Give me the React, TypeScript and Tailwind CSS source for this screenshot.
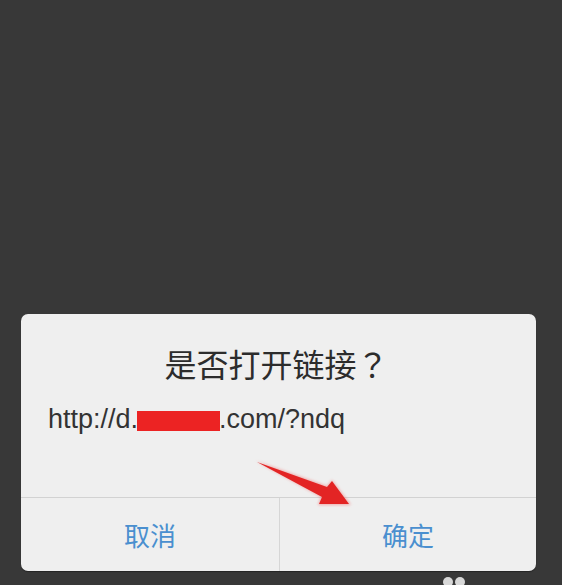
import React from 'react';

const latin = { fontFamily: '"Liberation Sans", "Noto Sans CJK SC", sans-serif' };
const cjk = { fontFamily: '"Noto Sans CJK SC", "Liberation Sans", sans-serif' };
const tc = { fontFamily: '"Noto Sans CJK TC", "Noto Sans CJK SC", sans-serif' };

function PointerArrow() {
  return (
    <svg
      className="pointer-events-none absolute left-0 top-0 h-full w-full"
      viewBox="0 0 515 257"
      fill="none"
    >
      <defs>
        <filter id="glow" x="-20%" y="-20%" width="140%" height="140%">
          <feGaussianBlur stdDeviation="1.4" />
        </filter>
      </defs>
      {/* soft halo round the marker */}
      <polygon
        points="235,147 306,172 311,166 330,191 297,191 300,183"
        fill="#f07070"
        opacity="0.55"
        filter="url(#glow)"
      />
      <polygon points="236,148 306,173 311,167 328,190 298,190 301,183" fill="#e32424" />
    </svg>
  );
}

export default function App() {
  return (
    <div className="relative h-[585px] w-full overflow-hidden bg-[#383838] pl-[21px] pt-[314px]">
      <div className="relative flex h-[257px] w-[515px] flex-col rounded-[7px] bg-[#efefef] shadow-[0_1px_1px_rgba(0,0,0,0.35)]">
        <div className="pt-[31px] pr-[4px] text-center text-[32px] leading-[37px] text-[#2c2c2c]" style={cjk}>
          是否打开链接<span style={tc}>？</span>
        </div>

        <div className="mt-[22px] pl-[27px] text-[27px] leading-[30px] text-[#333333]" style={latin}>
          http://d.
          <span className="-ml-[1px] -mr-[1px] inline-block h-[20px] w-[83px] translate-y-[3px] bg-[#ec2323] align-baseline" />
          .com/?ndq
        </div>

        <div className="flex-1" />

        <div className="flex h-[74px] border-t border-[#d2d2d2]" style={cjk}>
          <button type="button" className="flex-[258] text-[26px] text-[#4a8fcf]">
            取消
          </button>
          <div className="w-px bg-[#d6d6d6]" />
          <button type="button" className="flex-[256] text-[26px] text-[#4a8fcf]">
            确定
          </button>
        </div>

        <PointerArrow />
      </div>

      {/* edge of an icon peeking in under the dialog */}
      <div className="absolute left-[443px] top-[577px] flex gap-[2px]">
        <span className="h-[10px] w-[10px] rounded-full bg-[#d8d8d8]" />
        <span className="h-[10px] w-[10px] rounded-full bg-[#d8d8d8]" />
      </div>
    </div>
  );
}
